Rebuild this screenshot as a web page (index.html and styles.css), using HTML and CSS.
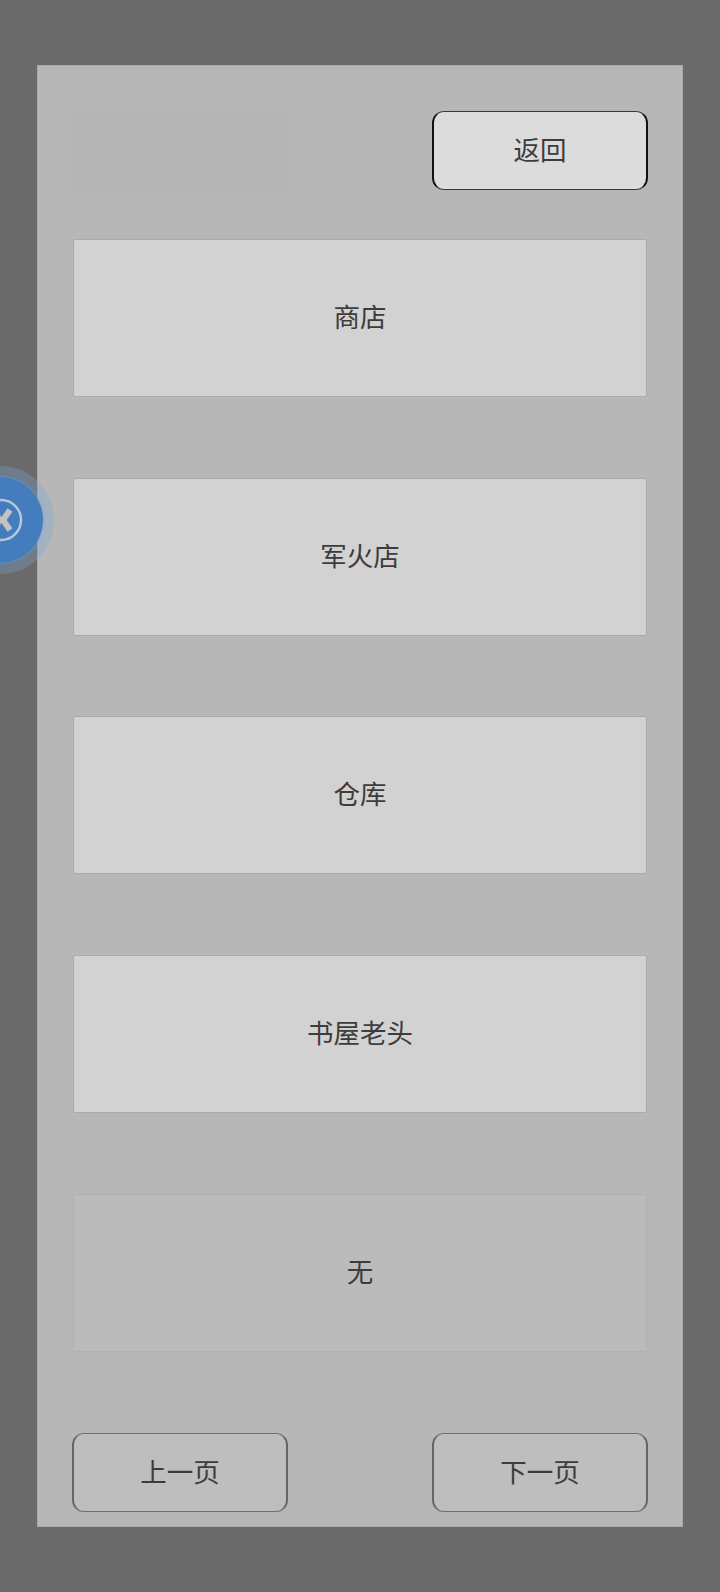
FILE: index.html
```html
<!DOCTYPE html>
<html lang="zh-CN">
  <head>
    <meta charset="UTF-8" />
    <meta name="viewport" content="width=device-width, initial-scale=1.0" />
    <title>商店</title>
    <link rel="stylesheet" href="styles.css">
  </head>
  <body>
    <!-- Floating side button -->
    <div class="float-btn">
      <svg class="float-icon" width="44" height="44" viewBox="0 0 44 44">
        <circle cx="22" cy="22" r="20" fill="none" stroke="#b4c8dc" stroke-width="2.5" />
        <path d="M31 12 L24 22 L31 32 M15 10 L20 22 L15 34" fill="none" stroke="#c2c2c2" stroke-width="6" />
      </svg>
    </div>

    <div class="panel">
      <div class="top-row">
        <div class="title-slot"></div>
        <button class="btn btn-dark">返回</button>
      </div>

      <div class="menu">
        <button class="menu-item">商店</button>
        <button class="menu-item">军火店</button>
        <button class="menu-item">仓库</button>
        <button class="menu-item">书屋老头</button>
        <button class="menu-item disabled">无</button>
      </div>

      <div class="pager">
        <button class="btn">上一页</button>
        <button class="btn">下一页</button>
      </div>
    </div>
  </body>
</html>
```

FILE: styles.css
```css
/* Basic reset and styling */
body {
  margin: 0;
  height: 1592px;
  overflow: hidden;
  background-color: #6a6a6a;
  font-family: "Liberation Sans", "Noto Sans CJK SC", sans-serif;
  color: #3c3c3c;
}

button {
  font-family: inherit;
  font-size: 26.5px;
  color: #3c3c3c;
  padding: 0;
}

.panel {
  box-sizing: border-box;
  width: 646px;
  height: 1462px;
  margin: 65px 0 0 37px;
  padding: 45px 34px 15px 34px;
  display: flex;
  flex-direction: column;
  background-color: #b7b7b7;
  border: 1px solid #a8a8a8;
}

.top-row,
.pager {
  display: flex;
  justify-content: space-between;
}

.title-slot {
  width: 216px;
  height: 80px;
  margin-top: 1px;
  background-color: #b5b5b5;
}

.btn {
  width: 216px;
  height: 79px;
  padding-bottom: 4px;
  background-color: #bebebe;
  border-style: solid;
  border-width: 1.5px 2px;
  border-color: #6e6e6e #666;
  border-radius: 12px;
}

.btn-dark {
  background-color: #dcdcdc;
  border-color: #3a3a3a #111;
}

.menu {
  display: flex;
  flex-direction: column;
  gap: 80.7px;
  margin-top: 47px;
  margin-bottom: 81px;
}

.menu-item {
  height: 158px;
  margin: 0 1px;
  padding-bottom: 5px;
  background-color: #d2d2d2;
  border: 1px solid #aaaaaa;
  border-radius: 2px;
}

.menu-item.disabled {
  background-color: #bbbbbb;
  border-color: #b0b0b0;
}

/* Floating button sits half off the left edge */
.float-btn {
  position: absolute;
  left: -54px;
  top: 466px;
  width: 108px;
  height: 108px;
  border-radius: 50%;
  background: radial-gradient(circle, rgba(120, 165, 215, 0.3) 78%, rgba(120, 165, 215, 0.04) 100%);
  display: flex;
  align-items: center;
  justify-content: center;
}

.float-btn::before {
  content: "";
  position: absolute;
  left: 11px;
  top: 11px;
  width: 86px;
  height: 86px;
  border-radius: 50%;
  background-color: #437dbd;
  box-shadow: 0 0 3px #6d9fd8;
}

.float-icon {
  position: relative;
  left: 1px;
}
```
